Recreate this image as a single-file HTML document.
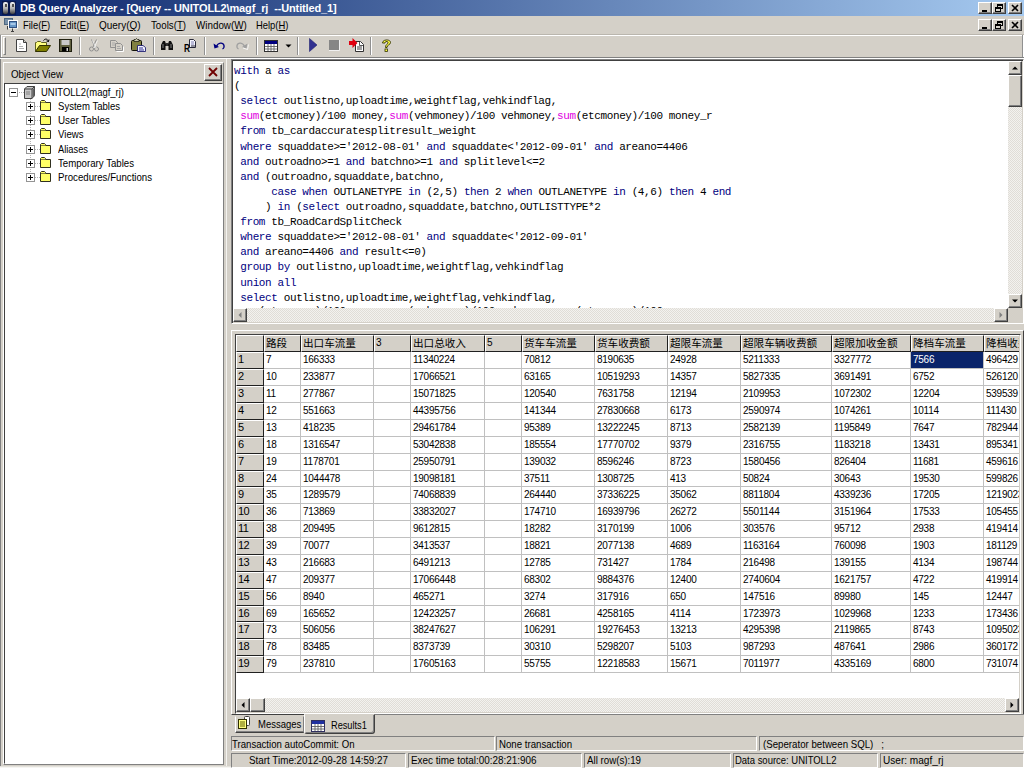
<!DOCTYPE html>
<html><head><meta charset="utf-8"><title>DB Query Analyzer</title>
<style>
*{margin:0;padding:0;box-sizing:border-box}
html,body{width:1024px;height:768px;overflow:hidden;background:#d4d0c8;font-family:"Liberation Sans","Noto Sans CJK SC",sans-serif;font-size:11px;color:#000}
.a{position:absolute}
.t{position:absolute;white-space:pre;line-height:14px;height:14px;transform-origin:0 50%}
#title{left:0;top:0;width:1024px;height:16px;background:linear-gradient(90deg,#0a246a 0%,#a6caf0 100%)}
.cbtn{position:absolute;width:14px;height:12px;background:#d4d0c8;border:1px solid;border-color:#fff #404040 #404040 #fff;box-shadow:inset -1px -1px 0 #808080}
.cbtn svg{position:absolute;left:0;top:0}
.sep{position:absolute;top:37px;width:2px;height:18px;border-left:1px solid #909090;border-right:1px solid #fff}
.sunk{border:1px solid;border-color:#808080 #fff #fff #808080}
.sunk2{border:2px solid;border-color:#808080 #fff #fff #808080;box-shadow:inset 1px 1px 0 #404040,inset -1px -1px 0 #d4d0c8}
.raised{background:#d4d0c8;border:1px solid;border-color:#fff #404040 #404040 #fff;box-shadow:inset -1px -1px 0 #808080}
.sbtrack{background-color:#f3f2ef;background-image:linear-gradient(45deg,#e0ddd7 25%,transparent 25%,transparent 75%,#e0ddd7 75%),linear-gradient(45deg,#e0ddd7 25%,transparent 25%,transparent 75%,#e0ddd7 75%);background-size:2px 2px;background-position:0 0,1px 1px}
.code{position:absolute;left:234px;white-space:pre;font-family:"Liberation Mono",monospace;font-size:11px;letter-spacing:-0.39px;height:15px;line-height:15px;color:#000}
.k{color:#000080}.f{color:#e000e0}
.tree{position:absolute;white-space:pre;line-height:14px;height:14px;font-size:11px}
.pm{position:absolute;width:9px;height:9px;border:1px solid #949494;background:#fff}
.pm:before{content:"";position:absolute;left:1px;top:3px;width:5px;height:1px;background:#000}
.pm.p:after{content:"";position:absolute;left:3px;top:1px;width:1px;height:5px;background:#000}
.fold{position:absolute;width:12px;height:11px}
.hd{position:absolute;top:334px;height:17px;background:#d4d0c8;border-right:1px solid #202020;border-bottom:1px solid #202020;border-left:1px solid #fff;border-top:1px solid #fff;font-size:10.6px;line-height:14px;padding-left:1px;white-space:pre;overflow:hidden}
.rh{position:absolute;left:0;width:28px;height:17px;background:#d4d0c8;border-right:1px solid #202020;border-bottom:1px solid #202020;border-left:1px solid #fff;border-top:1px solid #fff;font-size:11px;line-height:13px;padding-left:1px;white-space:pre;letter-spacing:-0.6px}
.c{position:absolute;height:17px;font-size:10px;line-height:16px;padding-left:2px;white-space:pre;overflow:hidden;border-right:1px solid #c0c0c0;border-bottom:1px solid #c0c0c0;color:#000;letter-spacing:-0.25px}
.st{position:absolute;height:14px;border:1px solid;border-color:#808080 #fff #fff #808080;font-size:11px;line-height:12px;white-space:pre;overflow:hidden}
</style></head><body>

<div id="title" class="a"><div class="t" style="left:20px;top:1px;color:#fff;font-weight:bold;letter-spacing:-0.13px">DB Query Analyzer - [Query -- UNITOLL2\magf_rj  --Untitled_1]</div>
<svg class="a" style="left:2px;top:1px" width="14" height="14" viewBox="0 0 14 14"><defs><linearGradient id="cy" x1="0" y1="0" x2="0" y2="1"><stop offset="0" stop-color="#f4f4f4"/><stop offset="0.55" stop-color="#b0b0b0"/><stop offset="1" stop-color="#404040"/></linearGradient></defs><rect x="0" y="0" width="14" height="14" fill="#08103a" opacity="0.6"/><rect x="1" y="1" width="5" height="12" rx="2" fill="url(#cy)"/><rect x="8" y="1" width="5" height="12" rx="2" fill="url(#cy)"/><rect x="3" y="3" width="2" height="3" fill="#505050"/><rect x="10" y="3" width="2" height="3" fill="#505050"/></svg>
</div>
<div class="cbtn" style="left:978px;top:2px"><svg width="12" height="10"><rect x="3" y="7" width="5" height="2" fill="#000"/></svg></div><div class="cbtn" style="left:992px;top:2px"><svg width="12" height="10"><rect x="4.5" y="1.5" width="5" height="4" fill="none" stroke="#000"/><rect x="4" y="1" width="6" height="2" fill="#000"/><rect x="2.5" y="4.5" width="5" height="4" fill="#d4d0c8" stroke="#000"/><rect x="2" y="4" width="6" height="2" fill="#000"/></svg></div><div class="cbtn" style="left:1008px;top:2px"><svg width="12" height="10"><path d="M3 2 L9 8 M9 2 L3 8" stroke="#000" stroke-width="1.6"/></svg></div>
<div class="a" style="left:0;top:16px;width:1024px;height:18px;background:#d4d0c8"></div>
<svg class="a" style="left:4px;top:18px" width="14" height="14" viewBox="0 0 14 14"><rect x="0.5" y="0.5" width="8" height="6" fill="#7890a8" stroke="#506880"/><rect x="4" y="2" width="10" height="8.500" fill="#fff"/><rect x="5.500" y="3.500" width="7" height="6" fill="#6898c8" stroke="#305080"/><rect x="6.500" y="5" width="5" height="2" fill="#a8c8e8"/><path d="M3.500 8v3.500M8.500 10.500v2.500M7 13.500h3" stroke="#404040"/></svg>
<div class="t" style="left:22.6px;top:18px;transform:scaleX(0.857);">File(<u>F</u>)</div>
<div class="t" style="left:59.7px;top:18px;transform:scaleX(0.864);">Edit(<u>E</u>)</div>
<div class="t" style="left:99px;top:18px;transform:scaleX(0.907);">Query(<u>Q</u>)</div>
<div class="t" style="left:151px;top:18px;transform:scaleX(0.882);">Tools(<u>T</u>)</div>
<div class="t" style="left:196px;top:18px;transform:scaleX(0.894);">Window(<u>W</u>)</div>
<div class="t" style="left:256px;top:18px;transform:scaleX(0.855);">Help(<u>H</u>)</div>
<div class="cbtn" style="left:978px;top:19px"><svg width="12" height="10"><rect x="3" y="7" width="5" height="2" fill="#000"/></svg></div><div class="cbtn" style="left:992px;top:19px"><svg width="12" height="10"><rect x="4.5" y="1.5" width="5" height="4" fill="none" stroke="#000"/><rect x="4" y="1" width="6" height="2" fill="#000"/><rect x="2.5" y="4.5" width="5" height="4" fill="#d4d0c8" stroke="#000"/><rect x="2" y="4" width="6" height="2" fill="#000"/></svg></div><div class="cbtn" style="left:1008px;top:19px"><svg width="12" height="10"><path d="M3 2 L9 8 M9 2 L3 8" stroke="#000" stroke-width="1.6"/></svg></div>
<div class="a" style="left:0;top:34px;width:1024px;height:1px;background:#bab6ae"></div>
<div class="a" style="left:1px;top:35px;width:1021px;height:1px;background:#fff"></div>
<div class="a" style="left:0;top:35px;width:1px;height:22px;background:#909090"></div>
<div class="a" style="left:1px;top:35px;width:1px;height:22px;background:#fff"></div>
<div class="a" style="left:1022px;top:35px;width:1px;height:22px;background:#909090"></div>
<div class="a" style="left:1023px;top:35px;width:1px;height:22px;background:#fff"></div>
<div class="a" style="left:0;top:57px;width:1024px;height:1px;background:#808080"></div>
<div class="a" style="left:0;top:58px;width:1024px;height:1px;background:#fff"></div>
<div class="a" style="left:3px;top:37px;width:3px;height:18px;border:1px solid;border-color:#fff #808080 #808080 #fff"></div>
<div class="sep" style="left:79px"></div>
<div class="sep" style="left:153px"></div>
<div class="sep" style="left:204px"></div>
<div class="sep" style="left:256px"></div>
<div class="sep" style="left:297px"></div>
<div class="sep" style="left:370px"></div>
<svg class="a" style="left:16px;top:39px" width="11" height="13" viewBox="0 0 11 13"><path d="M0.5 0.5H7.5L10.5 3.5V12.5H0.5Z" fill="#fff" stroke="#404040"/><path d="M7.5 0.5V3.5H10.5" fill="#d4d0c8" stroke="#404040"/><path d="M3 5h2M3 7.5h4M3 9.5h5" stroke="#b0b0b0"/></svg>
<svg class="a" style="left:35px;top:38px" width="16" height="14" viewBox="0 0 16 14"><path d="M0.5 13.5V4.5H1.5L2.5 3.5H5.5L6.5 4.5H11.5V7.5" fill="#ffff80" stroke="#606020"/><path d="M0.5 13.5L4.5 7.5H15.5L11.5 13.5Z" fill="#808000" stroke="#303000"/><path d="M8.5 2.5C10 0.5 12.5 0.5 13.5 3.5M13.5 3.5L11.5 3M13.5 3.5L14 1.5" fill="none" stroke="#000"/></svg>
<svg class="a" style="left:59px;top:39px" width="13" height="13" viewBox="0 0 13 13"><rect x="0.5" y="0.5" width="12" height="12" fill="#606040" stroke="#202010"/><rect x="2.5" y="1" width="8" height="5" fill="#c8c8c8"/><rect x="3" y="8" width="7" height="4.5" fill="#000"/><rect x="7.5" y="9" width="1.5" height="3" fill="#d0d0d0"/></svg>
<svg class="a" style="left:89px;top:39px" width="10" height="13" viewBox="0 0 10 13"><path d="M2.5 0.5L6 8M7.5 0.5L4 8" stroke="#909090" fill="none"/><circle cx="2.5" cy="10" r="2" fill="none" stroke="#909090"/><circle cx="7.5" cy="10" r="2" fill="none" stroke="#909090"/><path d="M3.5 1.5L7 9M8.5 1.5L5 9" stroke="#fff" fill="none" opacity="0.7"/></svg>
<svg class="a" style="left:110px;top:40px" width="14" height="12" viewBox="0 0 14 12"><path d="M0.5 0.5H5.5L7.5 2.5V7.5H0.5Z" fill="#d4d0c8" stroke="#909090"/><path d="M5.5 3.5H10.5L12.5 5.5V10.5H5.5Z" fill="#d4d0c8" stroke="#909090"/><path d="M2 3h3M2 5h3M7 6.500h3M7 8.500h4" stroke="#a8a8a8"/><path d="M6.500 11.500H13.500V6.500" stroke="#fff" fill="none"/></svg>
<svg class="a" style="left:131px;top:38px" width="16" height="14" viewBox="0 0 16 14"><rect x="0.5" y="2.500" width="10" height="10" rx="1" fill="#808040" stroke="#101008"/><path d="M3 3.500V1.500H4.500L5.500 0.500L6.500 1.500H8V3.500Z" fill="#c8c8b0" stroke="#202010" stroke-width="0.8"/><path d="M6.500 7.500H12L14.500 9.500V13.500H6.500Z" fill="#f4f4ff" stroke="#202070" stroke-width="0.9"/><path d="M8 10h4M8 12h5" stroke="#303090"/></svg>
<svg class="a" style="left:160px;top:40px" width="14" height="11" viewBox="0 0 14 11"><path d="M1 10V5L3 1H5L6 4H8L9 1H11L13 5V10H8.500V6H5.500V10Z" fill="#101010"/><rect x="6" y="3" width="2" height="3" fill="#303030"/><path d="M3 4v4M11 4v4" stroke="#a0a0a0" stroke-width="0.8"/></svg>
<svg class="a" style="left:184px;top:39px" width="13" height="13" viewBox="0 0 13 13"><path d="M5.500 0.500H9.500L11.500 2.500V8.500H5.500Z" fill="#f4f4ff" stroke="#282838"/><path d="M7 3h3M7 5h3" stroke="#8080b0"/><path d="M7 7h4" stroke="#282838"/><text x="0" y="13" font-family="Liberation Sans,sans-serif" font-weight="bold" font-size="11" fill="#000" textLength="6" lengthAdjust="spacingAndGlyphs">R</text></svg>
<svg class="a" style="left:213px;top:41px" width="13" height="9" viewBox="0 0 13 9"><path d="M3.500 5.500C5 1.500 10 1 11 4.500C11.300 6 10.500 7.500 9.500 8" fill="none" stroke="#000080" stroke-width="1.3"/><path d="M0.500 2.500L1.500 7.500L6 6Z" fill="#000080"/></svg>
<svg class="a" style="left:235px;top:41px" width="14" height="9" viewBox="0 0 14 9"><path d="M9.500 5.500C8 1.500 3 1 2 4.500C1.700 6 2.500 7.500 3.500 8" fill="none" stroke="#a0a0a0" stroke-width="1.3"/><path d="M12.500 2.500L11.500 7.500L7 6Z" fill="#a0a0a0"/><path d="M13.500 3.500L12.500 8.500L8 7" fill="none" stroke="#fff" stroke-width="0.8"/></svg>
<svg class="a" style="left:264px;top:40px" width="14" height="12" viewBox="0 0 14 12"><rect x="0.5" y="0.5" width="13" height="11" fill="#fff" stroke="#303030"/><rect x="1" y="1" width="12" height="3" fill="#000080"/><path d="M1 6.500h12M1 9h12M4 4v7M7 4v7M10 4v7" stroke="#606060" stroke-width="0.9"/></svg>
<svg class="a" style="left:285px;top:44px" width="7" height="4" viewBox="0 0 7 4"><path d="M0.500 0.500H6.500L3.500 3.500Z" fill="#000"/></svg>
<svg class="a" style="left:309px;top:38px" width="9" height="14" viewBox="0 0 9 14"><path d="M0.500 0.500L8 7L0.500 13.500Z" fill="#303090" stroke="#202070" stroke-width="0.6"/></svg>
<svg class="a" style="left:329px;top:40px" width="11" height="11" viewBox="0 0 11 11"><rect x="0" y="0" width="10" height="10" fill="#868686"/><path d="M0 10.500H10.500V0" stroke="#f0f0f0" fill="none"/></svg>
<svg class="a" style="left:349px;top:38px" width="16" height="14" viewBox="0 0 16 14"><path d="M6.500 3.500H11.500L14.500 6.500V13.500H6.500Z" fill="#fff" stroke="#303030"/><path d="M8 9h5M8 11h5" stroke="#404040"/><path d="M10.500 4v3.500h3.500" fill="none" stroke="#303030" stroke-width="0.8"/><path d="M0 3H3.500V0L8.500 5L3.500 10V7H0Z" fill="#e00010"/></svg>
<svg class="a" style="left:380px;top:38px" width="13" height="14" viewBox="0 0 13 14"><path d="M2.500 5C2.500 1 10.500 1 10.500 4.500C10.500 7 7 6.500 7 9.500H5.500C5.500 6 8 6.500 8 4.500C8 3 5 3 5 5Z" fill="#ffff40" stroke="#303000" stroke-width="0.9"/><rect x="5" y="11" width="2.500" height="2.500" fill="#ffff40" stroke="#303000" stroke-width="0.8"/></svg>
<div class="a" style="left:0;top:59px;width:1px;height:707px;background:#808080"></div>
<div class="a" style="left:226px;top:59px;width:1px;height:709px;background:#f4f3f0"></div>
<div class="a" style="left:3px;top:62px;width:221px;height:703px;border:1px solid;border-color:#fff #808080 #808080 #fff"></div>
<div class="t" style="left:11px;top:67px;transform:scaleX(0.890);">Object View</div>
<div class="a raised" style="left:204px;top:64px;width:18px;height:17px"><svg width="16" height="15"><path d="M4 3L12 11M12 3L4 11" stroke="#700000" stroke-width="1.8"/></svg></div>
<div class="a" style="left:4px;top:83px;width:219px;height:681px;background:#fff;border:1px solid;border-color:#404040 #fff #fff #404040"></div>
<div class="a" style="left:13px;top:92px;width:11px;height:0;border-top:1px dotted #b4b4b4"></div>
<div class="a" style="left:30px;top:98px;width:0;height:80px;border-left:1px dotted #b4b4b4"></div>
<div class="pm" style="left:9px;top:88px"></div>
<svg class="a" style="left:24px;top:86px" width="12" height="13" viewBox="0 0 12 13"><path d="M0.500 3L3 0.500H10.500V9.500L8 12.500H0.500Z" fill="#c8c8c8" stroke="#404040"/><path d="M0.500 3H8V12.500M8 3L10.500 0.500" fill="none" stroke="#404040"/><rect x="8.500" y="2.500" width="2" height="8" fill="#606060"/><path d="M2 6h4M2 8h4" stroke="#808080"/></svg>
<div class="t" style="left:41px;top:85px;transform:scaleX(0.861);">UNITOLL2(magf_rj)</div>
<div class="a" style="left:35px;top:106px;width:5px;height:0;border-top:1px dotted #b4b4b4"></div>
<div class="pm p" style="left:26px;top:102px"></div>
<svg class="fold" style="left:40px;top:100px" viewBox="0 0 12 11"><path d="M0.500 10.500V1.500L1.500 0.500H4.500L5.500 1.500V2.500H10.500V10.500Z" fill="#ffff66" stroke="#303020"/><path d="M1 2.500H5" stroke="#303020" stroke-width="0.6"/></svg>
<div class="t" style="left:58px;top:99px;transform:scaleX(0.870);">System Tables</div>
<div class="a" style="left:35px;top:120px;width:5px;height:0;border-top:1px dotted #b4b4b4"></div>
<div class="pm p" style="left:26px;top:116px"></div>
<svg class="fold" style="left:40px;top:114px" viewBox="0 0 12 11"><path d="M0.500 10.500V1.500L1.500 0.500H4.500L5.500 1.500V2.500H10.500V10.500Z" fill="#ffff66" stroke="#303020"/><path d="M1 2.500H5" stroke="#303020" stroke-width="0.6"/></svg>
<div class="t" style="left:58px;top:113px;transform:scaleX(0.895);">User Tables</div>
<div class="a" style="left:35px;top:134px;width:5px;height:0;border-top:1px dotted #b4b4b4"></div>
<div class="pm p" style="left:26px;top:130px"></div>
<svg class="fold" style="left:40px;top:128px" viewBox="0 0 12 11"><path d="M0.500 10.500V1.500L1.500 0.500H4.500L5.500 1.500V2.500H10.500V10.500Z" fill="#ffff66" stroke="#303020"/><path d="M1 2.500H5" stroke="#303020" stroke-width="0.6"/></svg>
<div class="t" style="left:58px;top:127px;transform:scaleX(0.876);">Views</div>
<div class="a" style="left:35px;top:149px;width:5px;height:0;border-top:1px dotted #b4b4b4"></div>
<div class="pm p" style="left:26px;top:145px"></div>
<svg class="fold" style="left:40px;top:143px" viewBox="0 0 12 11"><path d="M0.500 10.500V1.500L1.500 0.500H4.500L5.500 1.500V2.500H10.500V10.500Z" fill="#ffff66" stroke="#303020"/><path d="M1 2.500H5" stroke="#303020" stroke-width="0.6"/></svg>
<div class="t" style="left:58px;top:142px;transform:scaleX(0.846);">Aliases</div>
<div class="a" style="left:35px;top:163px;width:5px;height:0;border-top:1px dotted #b4b4b4"></div>
<div class="pm p" style="left:26px;top:159px"></div>
<svg class="fold" style="left:40px;top:157px" viewBox="0 0 12 11"><path d="M0.500 10.500V1.500L1.500 0.500H4.500L5.500 1.500V2.500H10.500V10.500Z" fill="#ffff66" stroke="#303020"/><path d="M1 2.500H5" stroke="#303020" stroke-width="0.6"/></svg>
<div class="t" style="left:58px;top:156px;transform:scaleX(0.878);">Temporary Tables</div>
<div class="a" style="left:35px;top:177px;width:5px;height:0;border-top:1px dotted #b4b4b4"></div>
<div class="pm p" style="left:26px;top:173px"></div>
<svg class="fold" style="left:40px;top:171px" viewBox="0 0 12 11"><path d="M0.500 10.500V1.500L1.500 0.500H4.500L5.500 1.500V2.500H10.500V10.500Z" fill="#ffff66" stroke="#303020"/><path d="M1 2.500H5" stroke="#303020" stroke-width="0.6"/></svg>
<div class="t" style="left:58px;top:170px;transform:scaleX(0.879);">Procedures/Functions</div>
<div class="a" style="left:231px;top:59px;width:793px;height:265px;background:#fff;border:1px solid;border-color:#808080 #fff #fff #808080;box-shadow:inset 1px 1px 0 #404040,inset -1px -1px 0 #d4d0c8"></div>
<div class="a" style="left:233px;top:61px;width:775px;height:247px;overflow:hidden">
<div class="code" style="left:1px;top:3.00px"><span class="k">with</span> a <span class="k">as</span></div>
<div class="code" style="left:1px;top:18.11px">(</div>
<div class="code" style="left:1px;top:33.22px"> <span class="k">select</span> outlistno,uploadtime,weightflag,vehkindflag,</div>
<div class="code" style="left:1px;top:48.33px"> <span class="f">sum</span>(etcmoney)/100 money,<span class="f">sum</span>(vehmoney)/100 vehmoney,<span class="f">sum</span>(etcmoney)/100 money_r</div>
<div class="code" style="left:1px;top:63.44px"> <span class="k">from</span> tb_cardaccuratesplitresult_weight</div>
<div class="code" style="left:1px;top:78.55px"> <span class="k">where</span> squaddate&gt;='2012-08-01' <span class="k">and</span> squaddate&lt;'2012-09-01' <span class="k">and</span> areano=4406</div>
<div class="code" style="left:1px;top:93.66px"> <span class="k">and</span> outroadno&gt;=1 <span class="k">and</span> batchno&gt;=1 <span class="k">and</span> splitlevel&lt;=2</div>
<div class="code" style="left:1px;top:108.77px"> <span class="k">and</span> (outroadno,squaddate,batchno,</div>
<div class="code" style="left:1px;top:123.88px">      <span class="k">case</span> <span class="k">when</span> OUTLANETYPE <span class="k">in</span> (2,5) <span class="k">then</span> 2 <span class="k">when</span> OUTLANETYPE <span class="k">in</span> (4,6) <span class="k">then</span> 4 <span class="k">end</span></div>
<div class="code" style="left:1px;top:138.99px">     ) <span class="k">in</span> (<span class="k">select</span> outroadno,squaddate,batchno,OUTLISTTYPE*2</div>
<div class="code" style="left:1px;top:154.10px"> <span class="k">from</span> tb_RoadCardSplitCheck</div>
<div class="code" style="left:1px;top:169.21px"> <span class="k">where</span> squaddate&gt;='2012-08-01' <span class="k">and</span> squaddate&lt;'2012-09-01'</div>
<div class="code" style="left:1px;top:184.32px"> <span class="k">and</span> areano=4406 <span class="k">and</span> result&lt;=0)</div>
<div class="code" style="left:1px;top:199.43px"> <span class="k">group</span> <span class="k">by</span> outlistno,uploadtime,weightflag,vehkindflag</div>
<div class="code" style="left:1px;top:214.54px"> <span class="k">union</span> <span class="k">all</span></div>
<div class="code" style="left:1px;top:229.65px"> <span class="k">select</span> outlistno,uploadtime,weightflag,vehkindflag,</div>
<div class="code" style="left:1px;top:242.76px"> <span class="f">sum</span>(etcmoney)/100 money,<span class="f">sum</span>(vehmoney)/100 vehmoney,<span class="f">sum</span>(etcmoney)/100 money_r</div>
</div>
<div class="a sbtrack" style="left:1008px;top:61px;width:14px;height:247px"></div>
<div class="a raised" style="left:1008px;top:61px;width:14px;height:14px"><svg width="9" height="9" style="position:absolute;left:50%;top:50%;margin:-5px 0 0 -5px"><path d="M2 6.500L5 3.500L8 6.500Z" fill="#000"/></svg></div>
<div class="a raised" style="left:1008px;top:75px;width:14px;height:32px"></div>
<div class="a raised" style="left:1008px;top:294px;width:14px;height:14px"><svg width="9" height="9" style="position:absolute;left:50%;top:50%;margin:-5px 0 0 -5px"><path d="M2 3.500L5 6.500L8 3.500Z" fill="#000"/></svg></div>
<div class="a sbtrack" style="left:233px;top:308px;width:775px;height:14px"></div>
<div class="a raised" style="left:233px;top:308px;width:14px;height:14px"><svg width="9" height="9" style="position:absolute;left:50%;top:50%;margin:-5px 0 0 -5px"><path d="M6.500 2L3.500 5L6.500 8Z" fill="#808080"/></svg></div>
<div class="a raised" style="left:994px;top:308px;width:14px;height:14px"><svg width="9" height="9" style="position:absolute;left:50%;top:50%;margin:-5px 0 0 -5px"><path d="M3.500 2L6.500 5L3.500 8Z" fill="#808080"/></svg></div>
<div class="a" style="left:1008px;top:308px;width:14px;height:14px;background:#d4d0c8"></div>
<div class="a" style="left:231px;top:330px;width:793px;height:385px;border:1px solid;border-color:#fff #404040 #404040 #fff"></div>
<div class="a" style="left:235px;top:334px;width:786px;height:380px;background:#fff;border:1px solid;border-color:#404040 #fff #fff #404040;box-shadow:inset -1px -1px 0 #d4d0c8"></div>
<div class="a" style="left:236px;top:335px;width:783px;height:363px;overflow:hidden">
<div class="hd" style="left:0;top:0;width:28px"></div>
<div class="hd" style="left:28px;top:0;width:37px;font-size:10.6px">路段</div>
<div class="hd" style="left:65px;top:0;width:73px;font-size:10.6px">出口车流量</div>
<div class="hd" style="left:138px;top:0;width:37px;font-size:10px">3</div>
<div class="hd" style="left:175px;top:0;width:74px;font-size:10.6px">出口总收入</div>
<div class="hd" style="left:249px;top:0;width:37px;font-size:10px">5</div>
<div class="hd" style="left:286px;top:0;width:73px;font-size:10.6px">货车车流量</div>
<div class="hd" style="left:359px;top:0;width:73px;font-size:10.6px">货车收费额</div>
<div class="hd" style="left:432px;top:0;width:73px;font-size:10.6px">超限车流量</div>
<div class="hd" style="left:505px;top:0;width:91px;font-size:10.6px">超限车辆收费额</div>
<div class="hd" style="left:596px;top:0;width:79px;font-size:10.6px">超限加收金额</div>
<div class="hd" style="left:675px;top:0;width:73px;font-size:10.6px">降档车流量</div>
<div class="hd" style="left:748px;top:0;width:73px;font-size:10.6px">降档收费额</div>
<div class="rh" style="top:17px;left:0;height:17px">1</div>
<div class="c" style="left:28px;top:17px;width:37px;height:17px">7</div>
<div class="c" style="left:65px;top:17px;width:73px;height:17px">166333</div>
<div class="c" style="left:138px;top:17px;width:37px;height:17px"></div>
<div class="c" style="left:175px;top:17px;width:74px;height:17px">11340224</div>
<div class="c" style="left:249px;top:17px;width:37px;height:17px"></div>
<div class="c" style="left:286px;top:17px;width:73px;height:17px">70812</div>
<div class="c" style="left:359px;top:17px;width:73px;height:17px">8190635</div>
<div class="c" style="left:432px;top:17px;width:73px;height:17px">24928</div>
<div class="c" style="left:505px;top:17px;width:91px;height:17px">5211333</div>
<div class="c" style="left:596px;top:17px;width:79px;height:17px">3327772</div>
<div class="c" style="left:675px;top:17px;width:73px;height:17px;background:#0a246a;color:#fff">7566</div>
<div class="c" style="left:748px;top:17px;width:73px;height:17px">496429</div>
<div class="rh" style="top:34px;left:0;height:17px">2</div>
<div class="c" style="left:28px;top:34px;width:37px;height:17px">10</div>
<div class="c" style="left:65px;top:34px;width:73px;height:17px">233877</div>
<div class="c" style="left:138px;top:34px;width:37px;height:17px"></div>
<div class="c" style="left:175px;top:34px;width:74px;height:17px">17066521</div>
<div class="c" style="left:249px;top:34px;width:37px;height:17px"></div>
<div class="c" style="left:286px;top:34px;width:73px;height:17px">63165</div>
<div class="c" style="left:359px;top:34px;width:73px;height:17px">10519293</div>
<div class="c" style="left:432px;top:34px;width:73px;height:17px">14357</div>
<div class="c" style="left:505px;top:34px;width:91px;height:17px">5827335</div>
<div class="c" style="left:596px;top:34px;width:79px;height:17px">3691491</div>
<div class="c" style="left:675px;top:34px;width:73px;height:17px">6752</div>
<div class="c" style="left:748px;top:34px;width:73px;height:17px">526120</div>
<div class="rh" style="top:51px;left:0;height:17px">3</div>
<div class="c" style="left:28px;top:51px;width:37px;height:17px">11</div>
<div class="c" style="left:65px;top:51px;width:73px;height:17px">277867</div>
<div class="c" style="left:138px;top:51px;width:37px;height:17px"></div>
<div class="c" style="left:175px;top:51px;width:74px;height:17px">15071825</div>
<div class="c" style="left:249px;top:51px;width:37px;height:17px"></div>
<div class="c" style="left:286px;top:51px;width:73px;height:17px">120540</div>
<div class="c" style="left:359px;top:51px;width:73px;height:17px">7631758</div>
<div class="c" style="left:432px;top:51px;width:73px;height:17px">12194</div>
<div class="c" style="left:505px;top:51px;width:91px;height:17px">2109953</div>
<div class="c" style="left:596px;top:51px;width:79px;height:17px">1072302</div>
<div class="c" style="left:675px;top:51px;width:73px;height:17px">12204</div>
<div class="c" style="left:748px;top:51px;width:73px;height:17px">539539</div>
<div class="rh" style="top:68px;left:0;height:17px">4</div>
<div class="c" style="left:28px;top:68px;width:37px;height:17px">12</div>
<div class="c" style="left:65px;top:68px;width:73px;height:17px">551663</div>
<div class="c" style="left:138px;top:68px;width:37px;height:17px"></div>
<div class="c" style="left:175px;top:68px;width:74px;height:17px">44395756</div>
<div class="c" style="left:249px;top:68px;width:37px;height:17px"></div>
<div class="c" style="left:286px;top:68px;width:73px;height:17px">141344</div>
<div class="c" style="left:359px;top:68px;width:73px;height:17px">27830668</div>
<div class="c" style="left:432px;top:68px;width:73px;height:17px">6173</div>
<div class="c" style="left:505px;top:68px;width:91px;height:17px">2590974</div>
<div class="c" style="left:596px;top:68px;width:79px;height:17px">1074261</div>
<div class="c" style="left:675px;top:68px;width:73px;height:17px">10114</div>
<div class="c" style="left:748px;top:68px;width:73px;height:17px">111430</div>
<div class="rh" style="top:85px;left:0;height:17px">5</div>
<div class="c" style="left:28px;top:85px;width:37px;height:17px">13</div>
<div class="c" style="left:65px;top:85px;width:73px;height:17px">418235</div>
<div class="c" style="left:138px;top:85px;width:37px;height:17px"></div>
<div class="c" style="left:175px;top:85px;width:74px;height:17px">29461784</div>
<div class="c" style="left:249px;top:85px;width:37px;height:17px"></div>
<div class="c" style="left:286px;top:85px;width:73px;height:17px">95389</div>
<div class="c" style="left:359px;top:85px;width:73px;height:17px">13222245</div>
<div class="c" style="left:432px;top:85px;width:73px;height:17px">8713</div>
<div class="c" style="left:505px;top:85px;width:91px;height:17px">2582139</div>
<div class="c" style="left:596px;top:85px;width:79px;height:17px">1195849</div>
<div class="c" style="left:675px;top:85px;width:73px;height:17px">7647</div>
<div class="c" style="left:748px;top:85px;width:73px;height:17px">782944</div>
<div class="rh" style="top:102px;left:0;height:17px">6</div>
<div class="c" style="left:28px;top:102px;width:37px;height:17px">18</div>
<div class="c" style="left:65px;top:102px;width:73px;height:17px">1316547</div>
<div class="c" style="left:138px;top:102px;width:37px;height:17px"></div>
<div class="c" style="left:175px;top:102px;width:74px;height:17px">53042838</div>
<div class="c" style="left:249px;top:102px;width:37px;height:17px"></div>
<div class="c" style="left:286px;top:102px;width:73px;height:17px">185554</div>
<div class="c" style="left:359px;top:102px;width:73px;height:17px">17770702</div>
<div class="c" style="left:432px;top:102px;width:73px;height:17px">9379</div>
<div class="c" style="left:505px;top:102px;width:91px;height:17px">2316755</div>
<div class="c" style="left:596px;top:102px;width:79px;height:17px">1183218</div>
<div class="c" style="left:675px;top:102px;width:73px;height:17px">13431</div>
<div class="c" style="left:748px;top:102px;width:73px;height:17px">895341</div>
<div class="rh" style="top:119px;left:0;height:17px">7</div>
<div class="c" style="left:28px;top:119px;width:37px;height:17px">19</div>
<div class="c" style="left:65px;top:119px;width:73px;height:17px">1178701</div>
<div class="c" style="left:138px;top:119px;width:37px;height:17px"></div>
<div class="c" style="left:175px;top:119px;width:74px;height:17px">25950791</div>
<div class="c" style="left:249px;top:119px;width:37px;height:17px"></div>
<div class="c" style="left:286px;top:119px;width:73px;height:17px">139032</div>
<div class="c" style="left:359px;top:119px;width:73px;height:17px">8596246</div>
<div class="c" style="left:432px;top:119px;width:73px;height:17px">8723</div>
<div class="c" style="left:505px;top:119px;width:91px;height:17px">1580456</div>
<div class="c" style="left:596px;top:119px;width:79px;height:17px">826404</div>
<div class="c" style="left:675px;top:119px;width:73px;height:17px">11681</div>
<div class="c" style="left:748px;top:119px;width:73px;height:17px">459616</div>
<div class="rh" style="top:136px;left:0;height:16px">8</div>
<div class="c" style="left:28px;top:136px;width:37px;height:16px">24</div>
<div class="c" style="left:65px;top:136px;width:73px;height:16px">1044478</div>
<div class="c" style="left:138px;top:136px;width:37px;height:16px"></div>
<div class="c" style="left:175px;top:136px;width:74px;height:16px">19098181</div>
<div class="c" style="left:249px;top:136px;width:37px;height:16px"></div>
<div class="c" style="left:286px;top:136px;width:73px;height:16px">37511</div>
<div class="c" style="left:359px;top:136px;width:73px;height:16px">1308725</div>
<div class="c" style="left:432px;top:136px;width:73px;height:16px">413</div>
<div class="c" style="left:505px;top:136px;width:91px;height:16px">50824</div>
<div class="c" style="left:596px;top:136px;width:79px;height:16px">30643</div>
<div class="c" style="left:675px;top:136px;width:73px;height:16px">19530</div>
<div class="c" style="left:748px;top:136px;width:73px;height:16px">599826</div>
<div class="rh" style="top:152px;left:0;height:17px">9</div>
<div class="c" style="left:28px;top:152px;width:37px;height:17px">35</div>
<div class="c" style="left:65px;top:152px;width:73px;height:17px">1289579</div>
<div class="c" style="left:138px;top:152px;width:37px;height:17px"></div>
<div class="c" style="left:175px;top:152px;width:74px;height:17px">74068839</div>
<div class="c" style="left:249px;top:152px;width:37px;height:17px"></div>
<div class="c" style="left:286px;top:152px;width:73px;height:17px">264440</div>
<div class="c" style="left:359px;top:152px;width:73px;height:17px">37336225</div>
<div class="c" style="left:432px;top:152px;width:73px;height:17px">35062</div>
<div class="c" style="left:505px;top:152px;width:91px;height:17px">8811804</div>
<div class="c" style="left:596px;top:152px;width:79px;height:17px">4339236</div>
<div class="c" style="left:675px;top:152px;width:73px;height:17px">17205</div>
<div class="c" style="left:748px;top:152px;width:73px;height:17px">1219023</div>
<div class="rh" style="top:169px;left:0;height:17px">10</div>
<div class="c" style="left:28px;top:169px;width:37px;height:17px">36</div>
<div class="c" style="left:65px;top:169px;width:73px;height:17px">713869</div>
<div class="c" style="left:138px;top:169px;width:37px;height:17px"></div>
<div class="c" style="left:175px;top:169px;width:74px;height:17px">33832027</div>
<div class="c" style="left:249px;top:169px;width:37px;height:17px"></div>
<div class="c" style="left:286px;top:169px;width:73px;height:17px">174710</div>
<div class="c" style="left:359px;top:169px;width:73px;height:17px">16939796</div>
<div class="c" style="left:432px;top:169px;width:73px;height:17px">26272</div>
<div class="c" style="left:505px;top:169px;width:91px;height:17px">5501144</div>
<div class="c" style="left:596px;top:169px;width:79px;height:17px">3151964</div>
<div class="c" style="left:675px;top:169px;width:73px;height:17px">17533</div>
<div class="c" style="left:748px;top:169px;width:73px;height:17px">105455</div>
<div class="rh" style="top:186px;left:0;height:17px">11</div>
<div class="c" style="left:28px;top:186px;width:37px;height:17px">38</div>
<div class="c" style="left:65px;top:186px;width:73px;height:17px">209495</div>
<div class="c" style="left:138px;top:186px;width:37px;height:17px"></div>
<div class="c" style="left:175px;top:186px;width:74px;height:17px">9612815</div>
<div class="c" style="left:249px;top:186px;width:37px;height:17px"></div>
<div class="c" style="left:286px;top:186px;width:73px;height:17px">18282</div>
<div class="c" style="left:359px;top:186px;width:73px;height:17px">3170199</div>
<div class="c" style="left:432px;top:186px;width:73px;height:17px">1006</div>
<div class="c" style="left:505px;top:186px;width:91px;height:17px">303576</div>
<div class="c" style="left:596px;top:186px;width:79px;height:17px">95712</div>
<div class="c" style="left:675px;top:186px;width:73px;height:17px">2938</div>
<div class="c" style="left:748px;top:186px;width:73px;height:17px">419414</div>
<div class="rh" style="top:203px;left:0;height:17px">12</div>
<div class="c" style="left:28px;top:203px;width:37px;height:17px">39</div>
<div class="c" style="left:65px;top:203px;width:73px;height:17px">70077</div>
<div class="c" style="left:138px;top:203px;width:37px;height:17px"></div>
<div class="c" style="left:175px;top:203px;width:74px;height:17px">3413537</div>
<div class="c" style="left:249px;top:203px;width:37px;height:17px"></div>
<div class="c" style="left:286px;top:203px;width:73px;height:17px">18821</div>
<div class="c" style="left:359px;top:203px;width:73px;height:17px">2077138</div>
<div class="c" style="left:432px;top:203px;width:73px;height:17px">4689</div>
<div class="c" style="left:505px;top:203px;width:91px;height:17px">1163164</div>
<div class="c" style="left:596px;top:203px;width:79px;height:17px">760098</div>
<div class="c" style="left:675px;top:203px;width:73px;height:17px">1903</div>
<div class="c" style="left:748px;top:203px;width:73px;height:17px">181129</div>
<div class="rh" style="top:220px;left:0;height:17px">13</div>
<div class="c" style="left:28px;top:220px;width:37px;height:17px">43</div>
<div class="c" style="left:65px;top:220px;width:73px;height:17px">216683</div>
<div class="c" style="left:138px;top:220px;width:37px;height:17px"></div>
<div class="c" style="left:175px;top:220px;width:74px;height:17px">6491213</div>
<div class="c" style="left:249px;top:220px;width:37px;height:17px"></div>
<div class="c" style="left:286px;top:220px;width:73px;height:17px">12785</div>
<div class="c" style="left:359px;top:220px;width:73px;height:17px">731427</div>
<div class="c" style="left:432px;top:220px;width:73px;height:17px">1784</div>
<div class="c" style="left:505px;top:220px;width:91px;height:17px">216498</div>
<div class="c" style="left:596px;top:220px;width:79px;height:17px">139155</div>
<div class="c" style="left:675px;top:220px;width:73px;height:17px">4134</div>
<div class="c" style="left:748px;top:220px;width:73px;height:17px">198744</div>
<div class="rh" style="top:237px;left:0;height:17px">14</div>
<div class="c" style="left:28px;top:237px;width:37px;height:17px">47</div>
<div class="c" style="left:65px;top:237px;width:73px;height:17px">209377</div>
<div class="c" style="left:138px;top:237px;width:37px;height:17px"></div>
<div class="c" style="left:175px;top:237px;width:74px;height:17px">17066448</div>
<div class="c" style="left:249px;top:237px;width:37px;height:17px"></div>
<div class="c" style="left:286px;top:237px;width:73px;height:17px">68302</div>
<div class="c" style="left:359px;top:237px;width:73px;height:17px">9884376</div>
<div class="c" style="left:432px;top:237px;width:73px;height:17px">12400</div>
<div class="c" style="left:505px;top:237px;width:91px;height:17px">2740604</div>
<div class="c" style="left:596px;top:237px;width:79px;height:17px">1621757</div>
<div class="c" style="left:675px;top:237px;width:73px;height:17px">4722</div>
<div class="c" style="left:748px;top:237px;width:73px;height:17px">419914</div>
<div class="rh" style="top:254px;left:0;height:17px">15</div>
<div class="c" style="left:28px;top:254px;width:37px;height:17px">56</div>
<div class="c" style="left:65px;top:254px;width:73px;height:17px">8940</div>
<div class="c" style="left:138px;top:254px;width:37px;height:17px"></div>
<div class="c" style="left:175px;top:254px;width:74px;height:17px">465271</div>
<div class="c" style="left:249px;top:254px;width:37px;height:17px"></div>
<div class="c" style="left:286px;top:254px;width:73px;height:17px">3274</div>
<div class="c" style="left:359px;top:254px;width:73px;height:17px">317916</div>
<div class="c" style="left:432px;top:254px;width:73px;height:17px">650</div>
<div class="c" style="left:505px;top:254px;width:91px;height:17px">147516</div>
<div class="c" style="left:596px;top:254px;width:79px;height:17px">89980</div>
<div class="c" style="left:675px;top:254px;width:73px;height:17px">145</div>
<div class="c" style="left:748px;top:254px;width:73px;height:17px">12447</div>
<div class="rh" style="top:271px;left:0;height:16px">16</div>
<div class="c" style="left:28px;top:271px;width:37px;height:16px">69</div>
<div class="c" style="left:65px;top:271px;width:73px;height:16px">165652</div>
<div class="c" style="left:138px;top:271px;width:37px;height:16px"></div>
<div class="c" style="left:175px;top:271px;width:74px;height:16px">12423257</div>
<div class="c" style="left:249px;top:271px;width:37px;height:16px"></div>
<div class="c" style="left:286px;top:271px;width:73px;height:16px">26681</div>
<div class="c" style="left:359px;top:271px;width:73px;height:16px">4258165</div>
<div class="c" style="left:432px;top:271px;width:73px;height:16px">4114</div>
<div class="c" style="left:505px;top:271px;width:91px;height:16px">1723973</div>
<div class="c" style="left:596px;top:271px;width:79px;height:16px">1029968</div>
<div class="c" style="left:675px;top:271px;width:73px;height:16px">1233</div>
<div class="c" style="left:748px;top:271px;width:73px;height:16px">173436</div>
<div class="rh" style="top:287px;left:0;height:17px">17</div>
<div class="c" style="left:28px;top:287px;width:37px;height:17px">73</div>
<div class="c" style="left:65px;top:287px;width:73px;height:17px">506056</div>
<div class="c" style="left:138px;top:287px;width:37px;height:17px"></div>
<div class="c" style="left:175px;top:287px;width:74px;height:17px">38247627</div>
<div class="c" style="left:249px;top:287px;width:37px;height:17px"></div>
<div class="c" style="left:286px;top:287px;width:73px;height:17px">106291</div>
<div class="c" style="left:359px;top:287px;width:73px;height:17px">19276453</div>
<div class="c" style="left:432px;top:287px;width:73px;height:17px">13213</div>
<div class="c" style="left:505px;top:287px;width:91px;height:17px">4295398</div>
<div class="c" style="left:596px;top:287px;width:79px;height:17px">2119865</div>
<div class="c" style="left:675px;top:287px;width:73px;height:17px">8743</div>
<div class="c" style="left:748px;top:287px;width:73px;height:17px">1095023</div>
<div class="rh" style="top:304px;left:0;height:17px">18</div>
<div class="c" style="left:28px;top:304px;width:37px;height:17px">78</div>
<div class="c" style="left:65px;top:304px;width:73px;height:17px">83485</div>
<div class="c" style="left:138px;top:304px;width:37px;height:17px"></div>
<div class="c" style="left:175px;top:304px;width:74px;height:17px">8373739</div>
<div class="c" style="left:249px;top:304px;width:37px;height:17px"></div>
<div class="c" style="left:286px;top:304px;width:73px;height:17px">30310</div>
<div class="c" style="left:359px;top:304px;width:73px;height:17px">5298207</div>
<div class="c" style="left:432px;top:304px;width:73px;height:17px">5103</div>
<div class="c" style="left:505px;top:304px;width:91px;height:17px">987293</div>
<div class="c" style="left:596px;top:304px;width:79px;height:17px">487641</div>
<div class="c" style="left:675px;top:304px;width:73px;height:17px">2986</div>
<div class="c" style="left:748px;top:304px;width:73px;height:17px">360172</div>
<div class="rh" style="top:321px;left:0;height:17px">19</div>
<div class="c" style="left:28px;top:321px;width:37px;height:17px">79</div>
<div class="c" style="left:65px;top:321px;width:73px;height:17px">237810</div>
<div class="c" style="left:138px;top:321px;width:37px;height:17px"></div>
<div class="c" style="left:175px;top:321px;width:74px;height:17px">17605163</div>
<div class="c" style="left:249px;top:321px;width:37px;height:17px"></div>
<div class="c" style="left:286px;top:321px;width:73px;height:17px">55755</div>
<div class="c" style="left:359px;top:321px;width:73px;height:17px">12218583</div>
<div class="c" style="left:432px;top:321px;width:73px;height:17px">15671</div>
<div class="c" style="left:505px;top:321px;width:91px;height:17px">7011977</div>
<div class="c" style="left:596px;top:321px;width:79px;height:17px">4335169</div>
<div class="c" style="left:675px;top:321px;width:73px;height:17px">6800</div>
<div class="c" style="left:748px;top:321px;width:73px;height:17px">731074</div>
</div>
<div class="a sbtrack" style="left:236px;top:698px;width:783px;height:14px"></div>
<div class="a raised" style="left:236px;top:698px;width:14px;height:14px"><svg width="9" height="9" style="position:absolute;left:50%;top:50%;margin:-5px 0 0 -5px"><path d="M6.500 2L3.500 5L6.500 8Z" fill="#000"/></svg></div>
<div class="a raised" style="left:250px;top:698px;width:15px;height:14px"></div>
<div class="a raised" style="left:1005px;top:698px;width:14px;height:14px"><svg width="9" height="9" style="position:absolute;left:50%;top:50%;margin:-5px 0 0 -5px"><path d="M3.500 2L6.500 5L3.500 8Z" fill="#000"/></svg></div>
<div class="a" style="left:235px;top:716px;width:69px;height:17px;border:1px solid;border-color:transparent #808080 #404040 #fff;box-shadow:inset 0 -1px 0 #808080"></div>
<svg class="a" style="left:238px;top:716px" width="14" height="14" viewBox="0 0 14 14"><rect x="6.500" y="0.500" width="5" height="9" rx="1" fill="#fff" stroke="#404040"/><rect x="0.500" y="3.500" width="8" height="9" fill="#ffff80" stroke="#303000"/><path d="M2 6h5M2 8h5M2 10h5" stroke="#606000"/></svg>
<div class="t" style="left:258px;top:717px;transform:scaleX(0.862);">Messages</div>
<div class="a" style="left:304px;top:714px;width:71px;height:20px;background:#d4d0c8;border:1px solid;border-color:transparent #404040 #404040 #fff;border-radius:0 0 3px 3px;box-shadow:inset -1px -1px 0 #808080"></div>
<svg class="a" style="left:311px;top:720px" width="14" height="12" viewBox="0 0 14 12"><rect x="0.500" y="0.500" width="13" height="11" fill="#fff" stroke="#303060"/><rect x="1" y="1" width="12" height="3" fill="#2030a0"/><path d="M1 6.500h12M1 9h12M4 4v7M7 4v7M10 4v7" stroke="#606060" stroke-width="0.9"/></svg>
<div class="t" style="left:331px;top:718px;transform:scaleX(0.837);">Results1</div>
<div class="a" style="left:375px;top:714px;width:649px;height:1px;background:#808080"></div>
<div class="st" style="left:231px;top:736px;width:264px;height:15px"></div>
<div class="t" style="left:232px;top:737px;transform:scaleX(0.874);">Transaction autoCommit: On</div>
<div class="st" style="left:496px;top:736px;width:261px;height:15px"></div>
<div class="t" style="left:498.5px;top:737px;transform:scaleX(0.878);">None transaction</div>
<div class="st" style="left:759px;top:736px;width:265px;height:15px"></div>
<div class="t" style="left:762.5px;top:737px;transform:scaleX(0.880);">(Seperator between SQL)   ;</div>
<div class="st" style="left:231px;top:753px;width:175px;height:15px"></div>
<div class="t" style="left:249px;top:753px;transform:scaleX(0.895);">Start Time:2012-09-28 14:59:27</div>
<div class="st" style="left:408px;top:753px;width:174px;height:15px"></div>
<div class="t" style="left:410.5px;top:753px;transform:scaleX(0.901);">Exec time total:00:28:21:906</div>
<div class="st" style="left:584px;top:753px;width:147px;height:15px"></div>
<div class="t" style="left:586.5px;top:753px;transform:scaleX(0.884);">All row(s):19</div>
<div class="st" style="left:733px;top:753px;width:145px;height:15px"></div>
<div class="t" style="left:734.5px;top:753px;transform:scaleX(0.861);">Data source: UNITOLL2</div>
<div class="st" style="left:880px;top:753px;width:144px;height:15px"></div>
<div class="t" style="left:883px;top:753px;transform:scaleX(0.916);">User: magf_rj</div>
<div class="a" style="left:0;top:766px;width:231px;height:1px;background:#e4e2dc"></div><div class="a" style="left:0;top:767px;width:231px;height:1px;background:#f6f5f2"></div>
</body></html>
